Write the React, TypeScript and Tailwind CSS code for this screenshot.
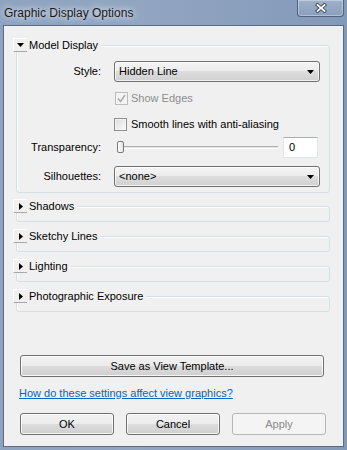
import React from "react";

const font = { fontFamily: '"Liberation Sans", Arial, sans-serif' };

function DownTri() {
  return (
    <svg width="7" height="4" viewBox="0 0 7 4" className="block">
      <path d="M0 0 H7 L3.5 4 Z" fill="#000" />
    </svg>
  );
}
function RightTri() {
  return (
    <svg width="4" height="7" viewBox="0 0 4 7" className="block">
      <path d="M0 0 V7 L4 3.5 Z" fill="#000" />
    </svg>
  );
}

function Expander({ open }: { open: boolean }) {
  return (
    <div className="w-[14px] h-[14px] flex items-center justify-center bg-[#f0f0f0] border-t border-l border-t-white border-l-white border-b border-b-[#a8a8a8]">
      {open ? <DownTri /> : <RightTri />}
    </div>
  );
}

function GroupHeader({ title, open }: { title: string; open: boolean }) {
  return (
    <div className="absolute left-[-4px] top-[-8px] flex items-center h-[14px]">
      <Expander open={open} />
      <span className="bg-[#f0f0f0] pl-[2px] pr-[3px] text-[11px] leading-[14px] text-black">{title}</span>
    </div>
  );
}

function Select({ value }: { value: string }) {
  return (
    <div className="w-[206px] h-[21px] rounded-[3px] border border-[#707070] bg-[linear-gradient(#f4f4f4_0%,#ececec_50%,#dddddd_50%,#d0d0d0_100%)] shadow-[inset_0_0_0_1px_rgba(255,255,255,0.7)] flex items-center pl-[4px] pr-[5px]">
      <span className="flex-1 text-[11px] text-black">{value}</span>
      <svg width="7" height="4" viewBox="0 0 7 4" className="block">
        <path d="M0 0 H7 L3.5 4 Z" fill="#000" />
      </svg>
    </div>
  );
}

function Check({ disabled, checked }: { disabled?: boolean; checked?: boolean }) {
  return (
    <div
      className={
        "w-[13px] h-[13px] border flex items-center justify-center " +
        (disabled
          ? "border-[#bcbcbc] bg-[#f4f4f4]"
          : "border-[#8e8f8f] bg-[linear-gradient(135deg,#dcdcdc,#fbfbfb)] shadow-[inset_0_0_0_1px_#f4f4f4]")
      }
    >
      {checked && (
        <svg width="9" height="9" viewBox="0 0 9 9">
          <path d="M1 4.5 L3.5 7.5 L8 1" stroke={disabled ? "#a8a8a8" : "#333"} strokeWidth="1.4" fill="none" />
        </svg>
      )}
    </div>
  );
}

function Btn({ label, disabled, w }: { label: string; disabled?: boolean; w: string }) {
  return (
    <div
      className={
        w +
        " h-[22px] rounded-[3px] border flex items-center justify-center text-[11px] " +
        (disabled
          ? "border-[#b4b8bb] bg-[#f4f4f4] text-[#8a8a8a]"
          : "border-[#707070] text-black bg-[linear-gradient(#f2f2f2_0%,#ebebeb_50%,#dddddd_50%,#cfcfcf_100%)] shadow-[inset_0_0_0_1px_rgba(255,255,255,0.8)]")
      }
    >
      {label}
    </div>
  );
}

function Collapsed({ title, mt }: { title: string; mt: string }) {
  return (
    <div className={"relative ml-[12px] w-[314px] h-[16px] rounded-[3px] border border-[#d5dfe5] shadow-[inset_1px_1px_0_#fff] " + mt}>
      <GroupHeader title={title} open={false} />
    </div>
  );
}

export default function App() {
  return (
    <div className="w-[347px] h-[450px] bg-[linear-gradient(90deg,#8ea3c0,#92a6c2_40%,#8399b8)] flex flex-col overflow-hidden" style={font}>
      {/* title bar */}
      <div className="h-[25px] flex items-start">
        <div className="flex-1 h-[25px] flex items-center pl-[4px]">
          <span className="text-[12px] text-[#1b1b1b] [text-shadow:0_0_6px_rgba(255,255,255,0.9),0_0_10px_rgba(255,255,255,0.6)]">
            Graphic Display Options
          </span>
        </div>
        <div className="mr-[3px] w-[47px] h-[17px] rounded-b-[4px] border border-t-0 border-[#52627c] shadow-[inset_0_0_0_1px_rgba(255,255,255,0.35)] bg-[linear-gradient(#9eb0c9,#8a9fbd)] flex items-center justify-center">
          <svg width="12" height="10" viewBox="0 0 12 10">
            <path d="M2.5 2 L9.5 8 M9.5 2 L2.5 8" stroke="#3b4452" strokeWidth="3.6" strokeLinecap="square" />
            <path d="M2.5 2 L9.5 8 M9.5 2 L2.5 8" stroke="#ffffff" strokeWidth="1.8" strokeLinecap="square" />
          </svg>
        </div>
      </div>

      {/* client area */}
      <div className="mx-[3px] h-[422px] border border-[#5b6b82] bg-[#f0f0f0] flex flex-col">
        {/* Model Display group */}
        <div className="relative mt-[19px] ml-[12px] w-[314px] rounded-[3px] border border-[#d5dfe5] shadow-[inset_1px_1px_0_#fff] pt-[15px] pb-[5px]">
          <GroupHeader title="Model Display" open={true} />
          <div className="flex items-center h-[21px]">
            <span className="w-[84px] text-right text-[11px] text-black">Style:</span>
            <div className="ml-[13px]">
              <Select value="Hidden Line" />
            </div>
          </div>
          <div className="flex items-center h-[13px] mt-[10px] ml-[98px]">
            <Check disabled checked />
            <span className="ml-[3px] text-[11px] text-[#8d8d8d]">Show Edges</span>
          </div>
          <div className="flex items-center h-[13px] mt-[13px] ml-[97px]">
            <Check />
            <span className="ml-[4px] text-[11px] text-black">Smooth lines with anti-aliasing</span>
          </div>
          <div className="flex items-center h-[21px] mt-[6px]">
            <span className="w-[84px] text-right text-[11px] text-black">Transparency:</span>
            <div className="ml-[16px] w-[161px] h-[21px] flex items-center relative">
              <div className="w-full h-[3px] border-t border-t-[#b0b0b0] border-b border-b-white bg-[#e4e4e4]" />
              <div className="absolute left-0 top-[4px] w-[7px] h-[12px] rounded-[2px] border border-[#7a7a7a] bg-[linear-gradient(90deg,#ffffff,#e2e2e2)]" />
            </div>
            <div className="ml-[5px] w-[35px] h-[21px] bg-white border border-[#e0e5ea] border-t-[#abadb3] flex items-center pl-[5px] text-[11px] text-black">
              0
            </div>
          </div>
          <div className="flex items-center h-[21px] mt-[8px]">
            <span className="w-[84px] text-right text-[11px] text-black">Silhouettes:</span>
            <div className="ml-[13px]">
              <Select value="<none>" />
            </div>
          </div>
        </div>

        <Collapsed title="Shadows" mt="mt-[13px]" />
        <Collapsed title="Sketchy Lines" mt="mt-[14px]" />
        <Collapsed title="Lighting" mt="mt-[14px]" />
        <Collapsed title="Photographic Exposure" mt="mt-[14px]" />

        <div className="mt-[43px] ml-[16px]">
          <Btn label="Save as View Template..." w="w-[304px]" />
        </div>
        <div className="mt-[10px] ml-[15px] text-[11px] leading-[13px] text-[#0066cc] underline">
          How do these settings affect view graphics?
        </div>
        <div className="mt-[13px] ml-[16px] flex gap-[12px]">
          <Btn label="OK" w="w-[94px]" />
          <Btn label="Cancel" w="w-[94px]" />
          <Btn label="Apply" w="w-[94px]" disabled />
        </div>
      </div>
    </div>
  );
}
